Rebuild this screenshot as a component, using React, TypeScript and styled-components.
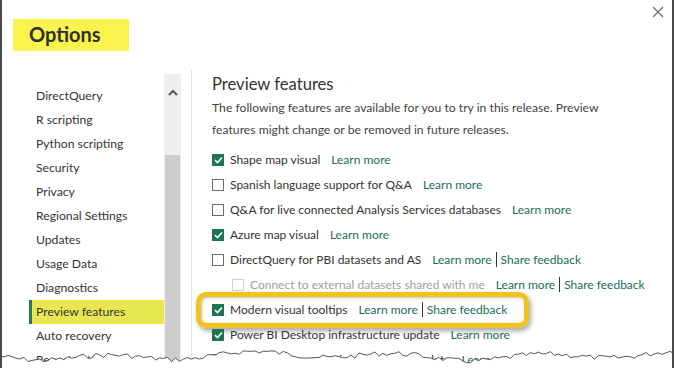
import styled, { createGlobalStyle } from "styled-components";

const GlobalStyle = createGlobalStyle`
  html, body {
    margin: 0;
    padding: 0;
    background: #ffffff;
  }
  body {
    font-family: Lato, "Open Sans", sans-serif;
    color: #333333;
  }
`;

const Dialog = styled.div`
  position: relative;
  width: 674px;
  height: 368px;
  box-sizing: border-box;
  border-left: 2px solid #4a4a4a;
  border-right: 2px solid #4a4a4a;
  background: #ffffff;
  overflow: hidden;
  display: flex;
  flex-direction: column;
`;

const TitleBar = styled.div`
  height: 70px;
  flex-shrink: 0;
  display: flex;
  justify-content: space-between;
  align-items: flex-start;
`;

const Title = styled.div`
  margin: 19px 0 0 11px;
  width: 116px;
  height: 32px;
  box-sizing: border-box;
  padding-left: 16px;
  background: #fbf34d;
  font-size: 20px;
  font-weight: 700;
  line-height: 31px;
  color: #2f2f2f;
`;

const CloseButton = styled.button`
  margin: 6px 8px 0 0;
  padding: 0;
  border: 0;
  background: none;
  width: 12px;
  height: 12px;
  display: flex;
`;

const Body = styled.div`
  flex: 1;
  display: flex;
  min-height: 0;
`;

const Sidebar = styled.div`
  width: 189px;
  flex-shrink: 0;
  display: flex;
  border-right: 1px solid #e2e2e2;
`;

const NavList = styled.ul`
  list-style: none;
  margin: 14px 0 0 27px;
  padding: 0;
  width: 135px;
`;

const NavItem = styled.li<{ $active?: boolean }>`
  height: 24px;
  line-height: 24px;
  box-sizing: border-box;
  padding-left: ${(p) => (p.$active ? "4px" : "7px")};
  font-size: 12.2px;
  color: #333333;
  white-space: nowrap;
  background: ${(p) => (p.$active ? "#e8e752" : "transparent")};
  border-left: ${(p) => (p.$active ? "3px solid #2b7a4b" : "0")};
`;

const Scrollbar = styled.div`
  margin-top: 4px;
  width: 17px;
  background: #efefef;
  display: flex;
  flex-direction: column;
  align-items: center;
`;

const ScrollArrow = styled.div`
  height: 40px;
  display: flex;
  align-items: center;
  justify-content: center;
  padding-bottom: 4px;
  box-sizing: border-box;
`;

const ScrollThumb = styled.div`
  margin-top: 41px;
  width: 15px;
  flex: 1;
  background: #cdcdcd;
`;

const Content = styled.div`
  flex: 1;
  padding-left: 20px;
`;

const Heading = styled.h2`
  margin: 2px 0 0;
  font-size: 16.6px;
  font-weight: 400;
  line-height: 24px;
  color: #333333;
`;

const Intro = styled.p`
  margin: 1px 0 6px;
  width: 420px;
  font-size: 12.2px;
  line-height: 22px;
  color: #444444;
`;

const FeatureList = styled.div`
  display: flex;
  flex-direction: column;
  align-items: flex-start;
`;

const Row = styled.div<{ $indent?: boolean; $highlight?: boolean }>`
  position: relative;
  height: 25px;
  display: flex;
  align-items: center;
  padding-left: ${(p) => (p.$indent ? "20px" : "0")};
  font-size: 12px;
  white-space: nowrap;

  ${(p) =>
    p.$highlight &&
    `
    &::after {
      content: "";
      position: absolute;
      top: -5px;
      bottom: -6px;
      left: -16px;
      right: -22px;
      border: 5px solid #f1c31f;
      border-radius: 10px;
      box-shadow: 2px 3px 5px rgba(0, 0, 0, 0.35), inset 1px 1px 3px rgba(0, 0, 0, 0.25);
      pointer-events: none;
    }
  `}
`;

const Box = styled.span<{ $checked?: boolean; $disabled?: boolean }>`
  width: 12px;
  height: 12px;
  box-sizing: border-box;
  border: 1px solid
    ${(p) => (p.$checked ? "#1d7352" : p.$disabled ? "#d0d0d0" : "#6b6b6b")};
  background: ${(p) => (p.$checked ? "#1d7352" : "#ffffff")};
  display: flex;
  align-items: center;
  justify-content: center;
  margin-right: 6px;
  flex-shrink: 0;
`;

const Label = styled.span<{ $disabled?: boolean }>`
  color: ${(p) => (p.$disabled ? "#a0a0a0" : "#333333")};
  margin-right: 11px;
`;

const Link = styled.a`
  color: #1b6d55;
  text-decoration: none;
`;

const Sep = styled.span`
  display: inline-block;
  width: 1px;
  height: 15px;
  background: #333333;
  margin: 0 4px;
`;

const Tear = styled.svg`
  position: absolute;
  left: 0;
  bottom: 0;
  width: 674px;
  height: 20px;
  margin-left: -2px;
`;

const navItems = [
  "DirectQuery",
  "R scripting",
  "Python scripting",
  "Security",
  "Privacy",
  "Regional Settings",
  "Updates",
  "Usage Data",
  "Diagnostics",
  "Preview features",
  "Auto recovery",
  "Report settings",
];

type Feature = {
  label: string;
  checked?: boolean;
  disabled?: boolean;
  indent?: boolean;
  feedback?: boolean;
  highlight?: boolean;
};

const features: Feature[] = [
  { label: "Shape map visual", checked: true },
  { label: "Spanish language support for Q&A" },
  { label: "Q&A for live connected Analysis Services databases" },
  { label: "Azure map visual", checked: true },
  { label: "DirectQuery for PBI datasets and AS", feedback: true },
  {
    label: "Connect to external datasets shared with me",
    disabled: true,
    indent: true,
    feedback: true,
  },
  { label: "Modern visual tooltips", checked: true, feedback: true, highlight: true },
  { label: "Power BI Desktop infrastructure update", checked: true },
  { label: "Webpage connector infrastructure update" },
];

// jagged line for the torn bottom edge
const tearPoints = (() => {
  const pts: string[] = [];
  let seed = 7;
  const rnd = () => {
    seed = (seed * 9301 + 49297) % 233280;
    return seed / 233280;
  };
  for (let x = 0; x <= 676; x += 4) {
    const base = 8 + Math.sin(x / 23) * 3 + Math.sin(x / 61) * 2;
    const y = base + (rnd() - 0.5) * 5;
    pts.push(`${x},${y.toFixed(1)}`);
  }
  return pts;
})();

export default function App() {
  return (
    <>
      <GlobalStyle />
      <Dialog>
        <TitleBar>
          <Title>Options</Title>
          <CloseButton aria-label="Close">
            <svg width="12" height="12" viewBox="0 0 12 12">
              <path d="M1 1L11 11M11 1L1 11" stroke="#6a6a6a" strokeWidth="1.2" fill="none" />
            </svg>
          </CloseButton>
        </TitleBar>
        <Body>
          <Sidebar>
            <NavList>
              {navItems.map((item) => (
                <NavItem key={item} $active={item === "Preview features"}>
                  {item}
                </NavItem>
              ))}
            </NavList>
            <Scrollbar>
              <ScrollArrow>
                <svg width="10" height="7" viewBox="0 0 10 7">
                  <path d="M1 6L5 2L9 6" stroke="#555555" strokeWidth="2" fill="none" />
                </svg>
              </ScrollArrow>
              <ScrollThumb />
            </Scrollbar>
          </Sidebar>
          <Content>
            <Heading>Preview features</Heading>
            <Intro>
              The following features are available for you to try in this release. Preview
              features might change or be removed in future releases.
            </Intro>
            <FeatureList>
              {features.map((f) => (
                <Row key={f.label} $indent={f.indent} $highlight={f.highlight}>
                  <Box $checked={f.checked} $disabled={f.disabled}>
                    {f.checked && (
                      <svg width="9" height="8" viewBox="0 0 9 8">
                        <path d="M1 4.2L3.5 6.5L8 1.5" stroke="#ffffff" strokeWidth="1.6" fill="none" />
                      </svg>
                    )}
                  </Box>
                  <Label $disabled={f.disabled}>{f.label}</Label>
                  <Link href="#">Learn more</Link>
                  {f.feedback && (
                    <>
                      <Sep />
                      <Link href="#">Share feedback</Link>
                    </>
                  )}
                </Row>
              ))}
            </FeatureList>
          </Content>
        </Body>
        <Tear viewBox="0 0 676 20" preserveAspectRatio="none">
          <polygon points={`0,20 ${tearPoints.join(" ")} 676,20`} fill="#ffffff" />
          <polyline points={tearPoints.join(" ")} fill="none" stroke="#555555" strokeWidth="1" />
        </Tear>
      </Dialog>
    </>
  );
}
